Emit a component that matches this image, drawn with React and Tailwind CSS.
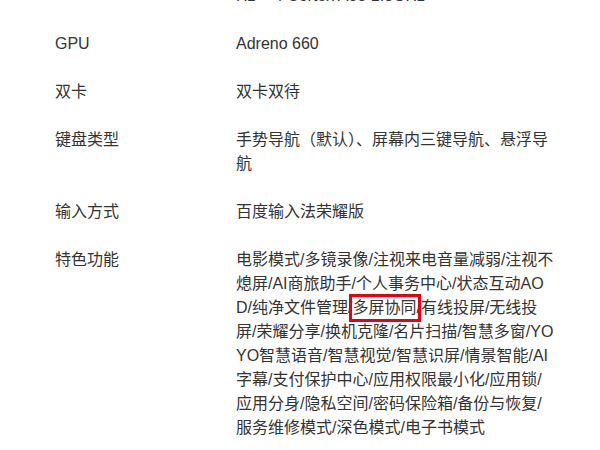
import React from "react";

const specs = [
  { label: "", value: "Hz + 4 Cortex A55 1.8GHz" },
  { label: "GPU", value: "Adreno 660" },
  { label: "双卡", value: "双卡双待" },
  { label: "键盘类型", value: "手势导航（默认）、屏幕内三键导航、悬浮导航" },
  { label: "输入方式", value: "百度输入法荣耀版" },
];

const Highlight = ({ children }) => (
  <span className="relative inline-block leading-6">
    {children}
    <span className="absolute -left-[3px] -right-[5px] -top-[2px] -bottom-[2px] border-[3px] border-[#e60012]" />
  </span>
);

const App = () => {
  return (
    <div
      className="w-[600px] h-[450px] overflow-hidden bg-white text-[#333] text-[16px] leading-6"
      style={{ fontFamily: '"Liberation Sans", "Noto Sans CJK SC", sans-serif' }}
    >
      <div className="-mt-[28px] pl-[55px]">
        {specs.map((row, i) => (
          <div key={i} className="flex py-3">
            <div className="w-[181px] shrink-0">{row.label}</div>
            <div className="w-[320px] break-all">{row.value}</div>
          </div>
        ))}
        <div className="flex py-3">
          <div className="w-[181px] shrink-0">特色功能</div>
          <div className="w-[320px] break-all">
            电影模式/多镜录像/注视来电音量减弱/注视不熄屏/AI商旅助手/个人事务中心/状态互动AOD/纯净文件管理/
            <Highlight>多屏协同</Highlight>
            /有线投屏/无线投屏/荣耀分享/换机克隆/名片扫描/智慧多窗/YOYO智慧语音/智慧视觉/智慧识屏/情景智能/AI字幕/支付保护中心/应用权限最小化/应用锁/应用分身/隐私空间/密码保险箱/备份与恢复/服务维修模式/深色模式/电子书模式
          </div>
        </div>
      </div>
    </div>
  );
};

export default App;
